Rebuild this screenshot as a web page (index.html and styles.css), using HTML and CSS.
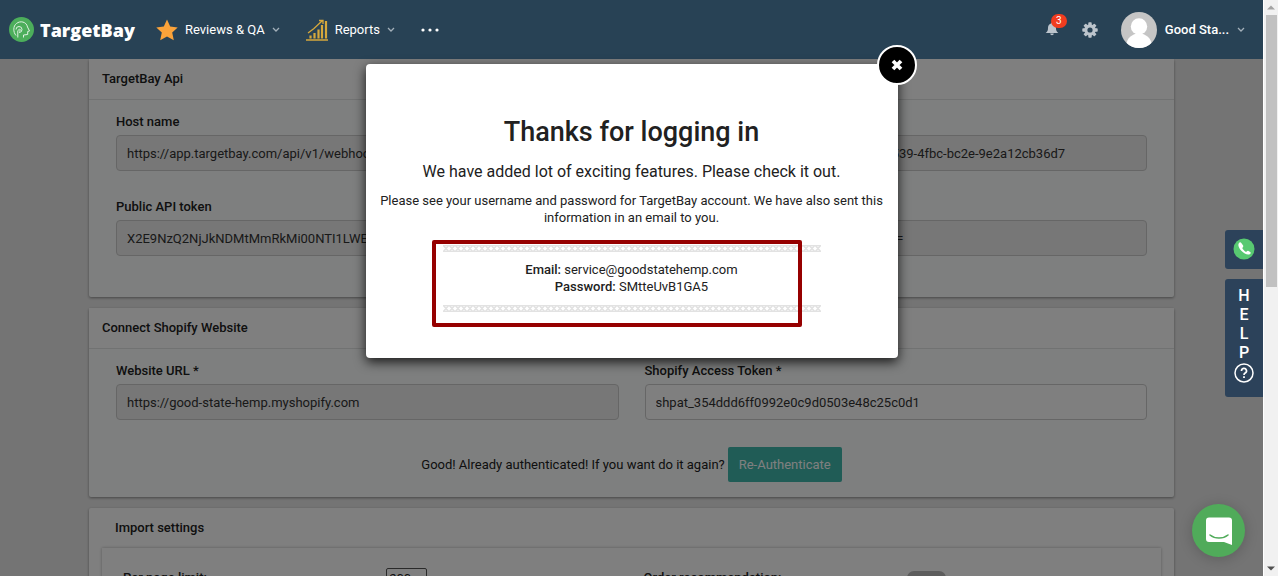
FILE: index.html
```html
<!DOCTYPE html>
<html lang="en">
<head>
    <meta charset="UTF-8">
    <meta name="viewport" content="width=device-width, initial-scale=1.0">
    <title>TargetBay</title>
    <link rel="stylesheet" href="styles.css">
</head>
<body>

<div class="app">
    <header class="topbar">
        <a class="logo" href="#">
            <svg width="25" height="25" viewBox="0 0 25 25" fill="none">
                <circle cx="12.5" cy="12.5" r="12.5" fill="#4cae5b"/>
                <path d="M7 18.500C4 15 4 9 7.500 6.500C11 3.500 17.500 4.500 18.500 10L20.500 14L18.700 14.500V17.500L14.500 18V20.500M8.800 20.500V13.500M7 12.500a3 3 0 1 1 3 3M10.500 12.300a.8.8 0 1 0 .1 0" stroke="#dff2e2" stroke-width="1"/>
            </svg>
            <span class="brand">TargetBay</span>
        </a>
        <nav class="menu">
            <a class="menu-item reviews" href="#">
                <svg width="22" height="22" viewBox="0 0 22 22"><path d="M11 .5l3.200 7 7.500.9-5.500 5.200 1.600 7.600L11 17.500l-6.800 3.700 1.600-7.600L.3 8.400l7.500-.9z" fill="#fba33a"/></svg>
                <span>Reviews &amp; QA</span>
                <svg class="chevron" width="8" height="6" viewBox="0 0 8 6"><path d="M1 1l3 3 3-3" fill="none" stroke="#a3b0ba" stroke-width="1.300"/></svg>
            </a>
            <a class="menu-item reports" href="#">
                <svg width="22" height="22" viewBox="0 0 22 22"><path d="M0 21h22" stroke="#d6a83c" stroke-width="1.500"/><path d="M4.500 16.500v3M8.500 14v5.500M12.500 10.500v9M16 6v13.500M20 2v17.500" fill="none" stroke="#d6a83c" stroke-width="2.200"/><path d="M2 14L8 9.500l8.500-8M13 1.500h4V5" fill="none" stroke="#d6a83c" stroke-width="1.300"/></svg>
                <span>Reports</span>
                <svg class="chevron" width="8" height="6" viewBox="0 0 8 6"><path d="M1 1l3 3 3-3" fill="none" stroke="#a3b0ba" stroke-width="1.300"/></svg>
            </a>
            <button class="more" aria-label="More">
                <svg width="18" height="4" viewBox="0 0 18 4" fill="#fff"><circle cx="2" cy="2" r="1.600"/><circle cx="9" cy="2" r="1.600"/><circle cx="16" cy="2" r="1.600"/></svg>
            </button>
        </nav>
        <div class="tools">
            <button class="bell" aria-label="Notifications">
                <svg width="14" height="14" viewBox="0 0 14 14" fill="#bcc4cc"><path d="M7 .5c.7 0 1 .4 1 1 2.200.6 3 2.300 3 4.500 0 2.500.7 3.600 2.300 5H.7C2.300 9.600 3 8.500 3 6c0-2.200.8-3.900 3-4.500 0-.6.3-1 1-1zM5.200 11.500h3.600a1.800 1.800 0 0 1-3.600 0z"/></svg>
                <span class="badge">3</span>
            </button>
            <button class="gear" aria-label="Settings">
                <svg width="16" height="16" viewBox="0 0 16 16"><g fill="#bcc4cc"><rect x="6.300" y=".3" width="3.400" height="15.400" rx=".8"/><rect x="6.300" y=".3" width="3.400" height="15.400" rx=".8" transform="rotate(45 8 8)"/><rect x="6.300" y=".3" width="3.400" height="15.400" rx=".8" transform="rotate(90 8 8)"/><rect x="6.300" y=".3" width="3.400" height="15.400" rx=".8" transform="rotate(135 8 8)"/><circle cx="8" cy="8" r="5.700"/></g><circle cx="8" cy="8" r="2.600" fill="#284255"/></svg>
            </button>
            <a class="account" href="#">
                <svg width="36" height="36" viewBox="0 0 36 36"><defs><clipPath id="face"><circle cx="18" cy="18" r="18"/></clipPath></defs><g clip-path="url(#face)"><rect width="36" height="36" fill="#c5c5c5"/><circle cx="18" cy="14.500" r="8.200" fill="#fff"/><ellipse cx="18" cy="33" rx="12.500" ry="11.500" fill="#fff"/></g></svg>
                <span>Good Sta...</span>
                <svg class="chevron" width="8" height="6" viewBox="0 0 8 6"><path d="M1 1l3 3 3-3" fill="none" stroke="#a3b0ba" stroke-width="1.300"/></svg>
            </a>
        </div>
    </header>

    <div class="page">
        <main class="content">
            <section class="card first">
                <h2>TargetBay Api</h2>
                <div class="card-body fields">
                    <div class="field">
                        <label for="host">Host name</label>
                        <input type="text" id="host" value="https://app.targetbay.com/api/v1/webhooks" disabled>
                    </div>
                    <div class="field">
                        <label for="index">API index name</label>
                        <input type="text" id="index" value="targetbay-goodstatehemp-7c1d02e4-10b539-4fbc-bc2e-9e2a12cb36d7" disabled>
                    </div>
                    <div class="field">
                        <label for="public-token">Public API token</label>
                        <input type="text" id="public-token" value="X2E9NzQ2NjJkNDMtMmRkMi00NTI1LWE4" disabled>
                    </div>
                    <div class="field">
                        <label for="token">API token</label>
                        <input type="text" id="token" value="X2E9NzQ2NjJkNDMtMmRkMi00NTI1LWE=" disabled>
                    </div>
                </div>
            </section>

            <section class="card">
                <h2>Connect Shopify Website</h2>
                <div class="card-body">
                    <div class="fields">
                        <div class="field">
                            <label for="website">Website URL *</label>
                            <input type="text" id="website" value="https://good-state-hemp.myshopify.com" disabled>
                        </div>
                        <div class="field">
                            <label for="shopify-token">Shopify Access Token *</label>
                            <input type="text" id="shopify-token" value="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">
                        </div>
                    </div>
                    <div class="auth">
                        <span>Good! Already authenticated! If you want do it again?</span>
                        <button class="auth-btn">Re-Authenticate</button>
                    </div>
                </div>
            </section>

            <section class="card import">
                <h2>Import settings</h2>
                <div class="panel">
                    <div class="setting">
                        <label for="limit">Per page limit:</label>
                        <input type="text" id="limit" value="200">
                    </div>
                    <div class="setting">
                        <label for="recommend">Order recommendation:</label>
                        <input type="checkbox" id="recommend" class="switch">
                    </div>
                </div>
            </section>
        </main>
    </div>

    <div class="overlay">
        <div class="modal">
            <button class="close" aria-label="Close">
                <svg width="12" height="12" viewBox="0 0 12 12"><path d="M2 2l8 8M10 2l-8 8" stroke="#fff" stroke-width="3.800"/></svg>
            </button>
            <h1>Thanks for logging in</h1>
            <p class="lead">We have added lot of exciting features. Please check it out.</p>
            <p>Please see your username and password for TargetBay account. We have also sent this information in an email to you.</p>
            <div class="credentials">
                <svg class="divider" width="378" height="7">
                    <defs><pattern id="cross" width="6" height="7" patternUnits="userSpaceOnUse"><path d="M0 0l6 7M6 0L0 7M1 .5h4M1 6.500h4" fill="none" stroke="#e2e2e2" stroke-width="1.500"/></pattern></defs>
                    <rect width="378" height="7" fill="url(#cross)"/>
                </svg>
                <p><b>Email:</b> service@goodstatehemp.com<br><b>Password:</b> SMtteUvB1GA5</p>
                <svg class="divider" width="378" height="7"><rect width="378" height="7" fill="url(#cross)"/></svg>
                <div class="highlight"></div>
            </div>
        </div>
    </div>

    <aside class="side-tabs">
        <button class="tab" aria-label="Call">
            <svg width="22" height="22" viewBox="0 0 22 22"><circle cx="11" cy="11" r="10.500" fill="#58c971"/><path d="M6.500 4.500c-2 1.500-1.200 5 1.800 8.200s6.700 4.800 8.800 3.200c.9-.7.8-1.400.1-1.900l-1.700-1.100c-.7-.4-1.300-.2-1.800.5-.6.6-1.300.3-2.800-1.200s-1.900-2.200-1.200-2.800c.6-.6.8-1.100.4-1.800L8.300 5c-.5-.8-1.100-1-1.800-.5z" fill="#fff"/></svg>
        </button>
        <button class="tab help">
            <span>H</span><span>E</span><span>L</span><span>P</span>
            <svg width="22" height="22" viewBox="0 0 22 22" fill="none" stroke="#fff"><circle cx="11" cy="11" r="9" stroke-width="1.500"/><path d="M8.500 9a2.500 2.500 0 1 1 3.700 2.100c-.9.500-1.200.8-1.200 1.900" stroke-width="1.700"/><path d="M11 14.300v1.700" stroke-width="1.800"/></svg>
        </button>
    </aside>

    <button class="chat" aria-label="Open chat">
        <svg width="28" height="30" viewBox="0 0 28 30"><path d="M4 1.500h20a3 3 0 0 1 3 3v24.500l-8-3H4a3 3 0 0 1-3-3V4.500a3 3 0 0 1 3-3z" fill="#fff"/><path d="M5 19c5 4 13 4 18 0" fill="none" stroke="#50ab5a" stroke-width="1.600" stroke-linecap="round"/></svg>
    </button>
</div>

<div class="scrollbar">
    <svg width="8" height="5" viewBox="0 0 8 5"><path d="M0 4.500L4 .5l4 4z" fill="#a3a3a3"/></svg>
    <div class="thumb"></div>
    <svg width="8" height="5" viewBox="0 0 8 5"><path d="M0 .5l4 4 4-4z" fill="#505050"/></svg>
</div>

</body>
</html>
```

FILE: styles.css
```css
* {
    margin: 0;
    padding: 0;
    box-sizing: border-box;
}

body {
    display: flex;
    height: 100vh;
    overflow: hidden;
    background: #e9e9e9;
    color: #212121;
    font-family: Roboto, sans-serif;
    font-size: 13px;
    line-height: 17px;
}

a {
    color: inherit;
    text-decoration: none;
}

svg {
    display: block;
    flex: none;
}

button,
input {
    font: inherit;
    color: inherit;
}

button {
    border: none;
    background: none;
    cursor: pointer;
}

b {
    font-weight: 500;
}

.app {
    position: relative;
    flex: 1;
    display: flex;
    flex-direction: column;
    min-width: 0;
    overflow: hidden;
}

/* top bar */
.topbar {
    flex: none;
    display: flex;
    align-items: center;
    height: 59px;
    padding: 0 18px 0 9px;
    background: #284255;
    color: #fff;
}

.logo,
.menu,
.menu-item,
.tools,
.account {
    display: flex;
    align-items: center;
}

.logo {
    gap: 6px;
    width: 147px;
}

.brand {
    font-family: "Open Sans", sans-serif;
    font-weight: 800;
    font-size: 18px;
    line-height: 24px;
}

.menu {
    gap: 26px;
}

.menu-item {
    gap: 7px;
}

.tools {
    margin-left: auto;
}

.bell {
    position: relative;
    padding-bottom: 2px;
}

.badge {
    position: absolute;
    left: 6px;
    top: -8px;
    width: 16px;
    height: 14px;
    border-radius: 7px;
    background: #f13c1f;
    color: #fff;
    font-size: 10px;
    line-height: 14px;
}

.gear {
    margin: 0 23px;
}

.account {
    gap: 8px;
    font-weight: 500;
}

/* settings page */
.page {
    flex: 1;
    min-height: 0;
    overflow: hidden;
}

.content {
    display: flex;
    flex-direction: column;
    gap: 11px;
    padding: 0 89px;
}

.card {
    background: #fcfffe;
    border-radius: 2px;
    box-shadow: 0 1px 3px rgba(0, 0, 0, 0.4);
}

.card h2 {
    padding: 11px 13px 12px;
    border-bottom: 1px solid #e3e5e4;
    background: #fff;
    font-size: 13px;
    font-weight: 500;
    line-height: 17px;
}

.fields {
    display: grid;
    grid-template-columns: 1fr 1fr;
    gap: 26px;
}

.card-body {
    padding: 13px 27px 15px;
}

.first .card-body {
    padding-bottom: 41px;
}

.field {
    display: flex;
    flex-direction: column;
    gap: 4px;
}

.field label,
.setting label {
    font-weight: 500;
    line-height: 18px;
}

.field input {
    width: 100%;
    height: 36px;
    padding: 0 10px;
    border: 1px solid #ccc;
    border-radius: 4px;
    background: #fff;
    color: #333;
}

.field input:disabled {
    background: #eee;
}

.first .fields,
.first.card .card-body {
    row-gap: 27px;
}

.auth {
    display: flex;
    justify-content: center;
    align-items: center;
    gap: 3px;
    margin-top: 27px;
}

.auth-btn {
    height: 35px;
    padding: 0 11px;
    border-radius: 2px;
    background: #40b9ad;
    color: #fff;
}

.import {
    padding: 0 13px;
    background: #fff;
}

.import h2 {
    border: none;
}

.panel {
    display: grid;
    grid-template-columns: 1fr 1fr;
    gap: 24px;
    padding: 20px 21px;
    box-shadow: 0 0 3px rgba(0, 0, 0, 0.3);
}

.setting {
    display: grid;
    grid-template-columns: 53% 1fr;
    align-items: center;
}

.setting input[type="text"] {
    width: 41px;
    height: 20px;
    padding: 0 2px;
    border: 1px solid #555;
    border-radius: 2px;
}

.switch {
    appearance: none;
    width: 39px;
    height: 14px;
    border-radius: 7px;
    background: #bbb;
}

/* modal, the dimmed layer starts under the top bar */
.overlay {
    position: absolute;
    inset: 59px 0 0;
    padding-top: 5px;
    background: rgba(0, 0, 0, 0.5);
}

.modal {
    position: relative;
    width: 532px;
    margin: 0 auto;
    padding: 48px 12px 46px;
    border-radius: 4px;
    background: #fff;
    box-shadow: 0 4px 12px rgba(0, 0, 0, 0.8);
    text-align: center;
}

.modal h1 {
    font-size: 27px;
    font-weight: 500;
    line-height: 40px;
}

.modal .lead {
    margin: 8px 0;
    font-size: 16px;
    line-height: 24px;
}

.close {
    position: absolute;
    right: -19px;
    top: -19px;
    display: flex;
    justify-content: center;
    align-items: center;
    width: 40px;
    height: 40px;
    border: 2px solid #fff;
    border-radius: 50%;
    background: #000;
}

.credentials {
    position: relative;
    display: flex;
    flex-direction: column;
    align-items: center;
    gap: 9px;
    margin-top: 19px;
}

.credentials .divider:last-of-type {
    margin-top: 1px;
}

/* red frame over the credentials */
.highlight {
    position: absolute;
    left: 54px;
    top: -5px;
    width: 370px;
    height: 87px;
    border: 4px solid #960000;
    border-radius: 2px;
}

/* floating buttons */
.side-tabs {
    position: absolute;
    right: 0;
    top: 230px;
    display: flex;
    flex-direction: column;
    gap: 10px;
}

.tab {
    display: flex;
    flex-direction: column;
    align-items: center;
    width: 38px;
    padding: 8px 0 9px;
    border-radius: 3px 0 0 3px;
    background: #2c425a;
    color: #fff;
}

.help {
    padding: 7px 0 13px;
    font-size: 16px;
    font-weight: 500;
    line-height: 19px;
}

.chat {
    position: absolute;
    right: 18px;
    bottom: 19px;
    display: flex;
    justify-content: center;
    align-items: center;
    width: 53px;
    height: 53px;
    border-radius: 50%;
    background: #50ab5a;
    box-shadow: 0 2px 14px rgba(0, 0, 0, 0.2);
}

.scrollbar {
    display: flex;
    flex-direction: column;
    align-items: center;
    width: 15px;
    padding: 5px 0;
    border-left: 1px solid #fff;
    background: #f1f1f1;
}

.thumb {
    width: 11px;
    height: 48%;
    margin: 5px 0 auto;
    background: #c1c1c1;
}
```
